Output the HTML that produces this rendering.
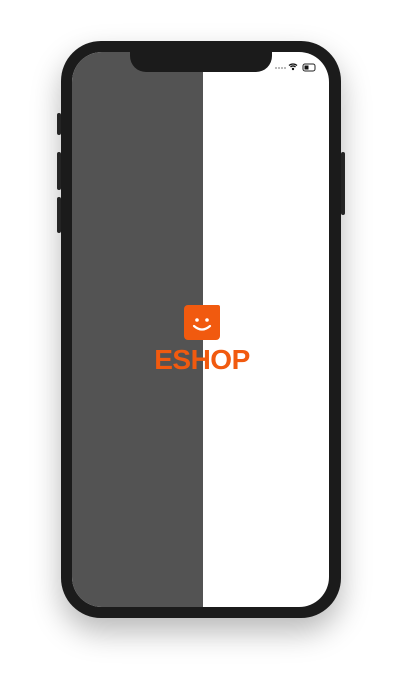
<!DOCTYPE html>
<html><head><style>
html,body{margin:0;width:404px;height:687px;background:#fff;overflow:hidden;position:relative}
.frame{position:absolute;left:61px;top:41px;width:280px;height:577px;background:#1b1b1b;border-radius:40px;box-shadow:0 14px 30px rgba(0,0,0,.28)}
.screen{position:absolute;left:72px;top:52px;width:257px;height:555px;border-radius:30px;overflow:hidden;background:#fff}
.gray{position:absolute;left:0;top:0;width:131px;height:100%;background:#535353}
.notch{position:absolute;left:130px;top:41px;width:142px;height:31px;background:#1b1b1b;border-radius:0 0 16px 16px}
.btn{position:absolute;background:#2a2a2a;width:4px;border-radius:2px}
.logo{position:absolute;left:184px;top:305px;width:36px;height:35px;background:#f15a0f;border-radius:4px 2px 4px 4px}
.txt{position:absolute;left:0;width:404px;top:344px;text-align:center;font:bold 28px "Liberation Sans",sans-serif;color:#f15a0f;letter-spacing:-0.5px}
</style></head><body>
<div class="btn" style="left:57px;top:113px;height:22px"></div>
<div class="btn" style="left:57px;top:152px;height:38px"></div>
<div class="btn" style="left:57px;top:197px;height:36px"></div>
<div class="btn" style="left:341px;top:152px;height:63px"></div>
<div class="frame"></div>
<div class="screen"><div class="gray"></div></div>
<div class="notch"></div>
<svg style="position:absolute;left:274px;top:62px" width="50" height="10">
<g fill="#bbb"><rect x="1" y="5" width="2" height="2"/><rect x="4" y="5" width="2" height="2"/><rect x="7" y="5" width="2" height="2"/><rect x="10" y="5" width="2" height="2"/></g>
<path d="M15 3.5a6 6 0 0 1 8 0M16.5 5a3.5 3.5 0 0 1 5 0" stroke="#111" stroke-width="1.3" fill="none"/><circle cx="19" cy="7" r="1.2" fill="#111"/>
<rect x="29" y="2" width="12" height="7" rx="2" fill="none" stroke="#222" stroke-width="1"/><rect x="30.5" y="3.5" width="4" height="4" fill="#111"/>
</svg>
<div class="logo"><svg width="36" height="35"><circle cx="13" cy="15" r="1.8" fill="#fff"/><circle cx="23" cy="15" r="1.8" fill="#fff"/><path d="M10 21q8 7 16 0" stroke="#fff" stroke-width="2.2" fill="none" stroke-linecap="round"/></svg></div>
<div class="txt">ESHOP</div>
</body></html>
